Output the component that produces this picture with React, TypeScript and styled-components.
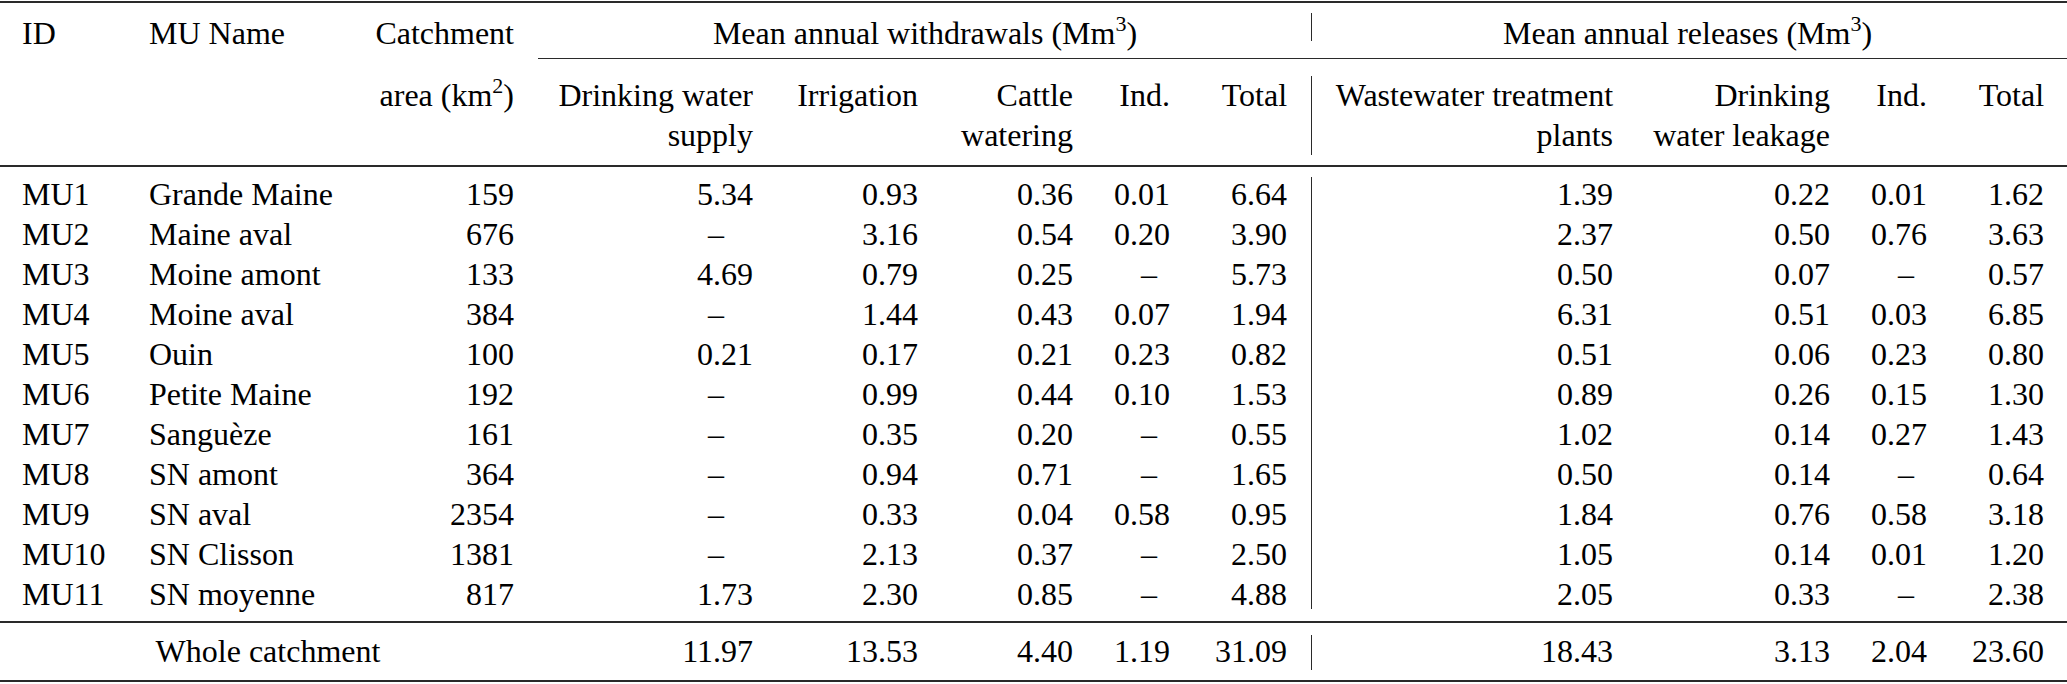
import styled, { createGlobalStyle } from 'styled-components';

const SERIF = '"Liberation Serif", "Times New Roman", serif';

const GlobalStyle = createGlobalStyle`
  html, body {
    margin: 0;
    padding: 0;
    background: #fff;
    font-family: ${SERIF};
  }
`;

type Row = { id: string; name: string; area: string; w: string[]; r: string[] };

const DASH = '–';

const rows: Row[] = [
  { id: 'MU1', name: 'Grande Maine', area: '159', w: ['5.34', '0.93', '0.36', '0.01', '6.64'], r: ['1.39', '0.22', '0.01', '1.62'] },
  { id: 'MU2', name: 'Maine aval', area: '676', w: [DASH, '3.16', '0.54', '0.20', '3.90'], r: ['2.37', '0.50', '0.76', '3.63'] },
  { id: 'MU3', name: 'Moine amont', area: '133', w: ['4.69', '0.79', '0.25', DASH, '5.73'], r: ['0.50', '0.07', DASH, '0.57'] },
  { id: 'MU4', name: 'Moine aval', area: '384', w: [DASH, '1.44', '0.43', '0.07', '1.94'], r: ['6.31', '0.51', '0.03', '6.85'] },
  { id: 'MU5', name: 'Ouin', area: '100', w: ['0.21', '0.17', '0.21', '0.23', '0.82'], r: ['0.51', '0.06', '0.23', '0.80'] },
  { id: 'MU6', name: 'Petite Maine', area: '192', w: [DASH, '0.99', '0.44', '0.10', '1.53'], r: ['0.89', '0.26', '0.15', '1.30'] },
  { id: 'MU7', name: 'Sanguèze', area: '161', w: [DASH, '0.35', '0.20', DASH, '0.55'], r: ['1.02', '0.14', '0.27', '1.43'] },
  { id: 'MU8', name: 'SN amont', area: '364', w: [DASH, '0.94', '0.71', DASH, '1.65'], r: ['0.50', '0.14', DASH, '0.64'] },
  { id: 'MU9', name: 'SN aval', area: '2354', w: [DASH, '0.33', '0.04', '0.58', '0.95'], r: ['1.84', '0.76', '0.58', '3.18'] },
  { id: 'MU10', name: 'SN Clisson', area: '1381', w: [DASH, '2.13', '0.37', DASH, '2.50'], r: ['1.05', '0.14', '0.01', '1.20'] },
  { id: 'MU11', name: 'SN moyenne', area: '817', w: ['1.73', '2.30', '0.85', DASH, '4.88'], r: ['2.05', '0.33', DASH, '2.38'] },
];

const whole = {
  w: ['11.97', '13.53', '4.40', '1.19', '31.09'],
  r: ['18.43', '3.13', '2.04', '23.60'],
};

// column widths line the right edges up with the original; dash = room kept right of a "–"
const COLS: { w: number; align: 'left' | 'right'; pl?: number; pr?: number; dash?: number }[] = [
  { w: 130, align: 'left', pl: 22 },
  { w: 230, align: 'left', pl: 19 },
  { w: 154, align: 'right' },
  { w: 239, align: 'right', dash: 29 },
  { w: 165, align: 'right' },
  { w: 155, align: 'right' },
  { w: 97, align: 'right', dash: 13 },
  { w: 117, align: 'right' },
  { w: 44, align: 'left' },
  { w: 282, align: 'right' },
  { w: 217, align: 'right' },
  { w: 97, align: 'right', dash: 13 },
  { w: 140, align: 'right', pr: 23 },
];

const RULE = '#2a2a2a';

function Value({ v, c }: { v: string; c: number }) {
  return v === DASH ? <Dash $gap={COLS[c].dash ?? 0}>{DASH}</Dash> : <>{v}</>;
}

function App() {
  const last = rows.length - 1;
  return (
    <>
      <GlobalStyle />
      <Table>
        <colgroup>
          {COLS.map((c, i) => (
            <Col key={i} $w={c.w} />
          ))}
        </colgroup>
        <thead>
          <tr>
            <Cell as="th" $c={0} $pt={10} $pb={6}>ID</Cell>
            <Cell as="th" $c={1} $pt={10} $pb={6}>MU Name</Cell>
            <Cell as="th" $c={2} $pt={10} $pb={6}>Catchment</Cell>
            <GroupCell colSpan={5}>
              <GroupRule $inset={24} $shiftL={25}>
                Mean annual withdrawals (Mm<Sup>3</Sup>)
              </GroupRule>
            </GroupCell>
            <GroupCell>
              <GroupRule>
                <Bar $top={0} $h={28} />
              </GroupRule>
            </GroupCell>
            <GroupCell colSpan={4}>
              <GroupRule $shiftR={23}>
                Mean annual releases (Mm<Sup>3</Sup>)
              </GroupRule>
            </GroupCell>
          </tr>
          <tr>
            <Cell as="th" $c={0} $pt={16} $pb={10} $rule={2} />
            <Cell as="th" $c={1} $pt={16} $pb={10} $rule={2} />
            <Cell as="th" $c={2} $pt={16} $pb={10} $rule={2}>
              area (km<Sup>2</Sup>)
            </Cell>
            <Cell as="th" $c={3} $pt={16} $pb={10} $rule={2}>
              Drinking water
              <br />
              supply
            </Cell>
            <Cell as="th" $c={4} $pt={16} $pb={10} $rule={2}>Irrigation</Cell>
            <Cell as="th" $c={5} $pt={16} $pb={10} $rule={2}>
              Cattle
              <br />
              watering
            </Cell>
            <Cell as="th" $c={6} $pt={16} $pb={10} $rule={2}>Ind.</Cell>
            <Cell as="th" $c={7} $pt={16} $pb={10} $rule={2}>Total</Cell>
            <Cell as="th" $c={8} $rule={2}>
              <Bar $top={17} $h={79} />
            </Cell>
            <Cell as="th" $c={9} $pt={16} $pb={10} $rule={2}>
              Wastewater treatment
              <br />
              plants
            </Cell>
            <Cell as="th" $c={10} $pt={16} $pb={10} $rule={2}>
              Drinking
              <br />
              water leakage
            </Cell>
            <Cell as="th" $c={11} $pt={16} $pb={10} $rule={2}>Ind.</Cell>
            <Cell as="th" $c={12} $pt={16} $pb={10} $rule={2}>Total</Cell>
          </tr>
        </thead>
        <tbody>
          {rows.map((row, i) => {
            const pt = i === 0 ? 7 : 0;
            const pb = i === last ? 7 : 0;
            const rule = i === last ? 2 : 0;
            return (
              <tr key={row.id}>
                <Cell $c={0} $pt={pt} $pb={pb} $rule={rule}>{row.id}</Cell>
                <Cell $c={1} $pt={pt} $pb={pb} $rule={rule}>{row.name}</Cell>
                <Cell $c={2} $pt={pt} $pb={pb} $rule={rule}>{row.area}</Cell>
                {row.w.map((v, j) => (
                  <Cell key={'w' + j} $c={3 + j} $pt={pt} $pb={pb} $rule={rule}>
                    <Value v={v} c={3 + j} />
                  </Cell>
                ))}
                {i === 0 && (
                  <Cell $c={8} rowSpan={rows.length} $rule={2}>
                    <Bar $top={10} $h={432} />
                  </Cell>
                )}
                {row.r.map((v, j) => (
                  <Cell key={'r' + j} $c={9 + j} $pt={pt} $pb={pb} $rule={rule}>
                    <Value v={v} c={9 + j} />
                  </Cell>
                ))}
              </tr>
            );
          })}
          <tr>
            <WholeCell colSpan={3}>Whole catchment</WholeCell>
            {whole.w.map((v, j) => (
              <Cell key={'w' + j} $c={3 + j} $pt={8} $pb={9} $rule={2}>{v}</Cell>
            ))}
            <Cell $c={8} $rule={2}>
              <Bar $top={12} $h={35} />
            </Cell>
            {whole.r.map((v, j) => (
              <Cell key={'r' + j} $c={9 + j} $pt={8} $pb={9} $rule={2}>{v}</Cell>
            ))}
          </tr>
        </tbody>
      </Table>
    </>
  );
}

export default App;

const Table = styled.table`
  margin-top: 1px;
  width: 2067px;
  table-layout: fixed;
  border-collapse: separate;
  border-spacing: 0;
  border-top: 2px solid ${RULE};
  font-family: ${SERIF};
  font-size: 32px;
  line-height: 40px;
  color: #000;
`;

const Col = styled.col<{ $w: number }>`
  width: ${(p) => p.$w}px;
`;

const Cell = styled.td<{ $c: number; $pt?: number; $pb?: number; $rule?: number }>`
  padding: ${(p) => p.$pt ?? 0}px ${(p) => COLS[p.$c].pr ?? 0}px ${(p) => p.$pb ?? 0}px
    ${(p) => COLS[p.$c].pl ?? 0}px;
  text-align: ${(p) => COLS[p.$c].align};
  vertical-align: top;
  white-space: nowrap;
  font-family: ${SERIF};
  font-size: 32px;
  font-weight: normal;
  border-bottom: ${(p) => (p.$rule ? `${p.$rule}px solid ${RULE}` : 'none')};
`;

const GroupCell = styled.th`
  padding: 10px 0 0 0;
  vertical-align: top;
  font-family: ${SERIF};
  font-size: 32px;
  font-weight: normal;
  white-space: nowrap;
`;

const GroupRule = styled.div<{ $inset?: number; $shiftL?: number; $shiftR?: number }>`
  display: flow-root;
  box-sizing: border-box;
  height: 46px;
  margin-left: ${(p) => p.$inset ?? 0}px;
  padding: 0 ${(p) => p.$shiftR ?? 0}px 5px ${(p) => p.$shiftL ?? 0}px;
  border-bottom: 1px solid ${RULE};
  text-align: center;
`;

const WholeCell = styled.td`
  padding: 8px 0 9px 22px;
  text-align: center;
  vertical-align: top;
  white-space: nowrap;
  font-family: ${SERIF};
  font-size: 32px;
  border-bottom: 2px solid ${RULE};
`;

const Bar = styled.div<{ $top: number; $h: number }>`
  width: 1px;
  height: ${(p) => p.$h}px;
  margin: ${(p) => p.$top}px 0 0 24px;
  background: ${RULE};
`;

const Dash = styled.span<{ $gap: number }>`
  display: inline-block;
  margin-right: ${(p) => p.$gap}px;
`;

const Sup = styled.sup`
  font-size: 22px;
  line-height: 0;
  vertical-align: 13px;
`;
